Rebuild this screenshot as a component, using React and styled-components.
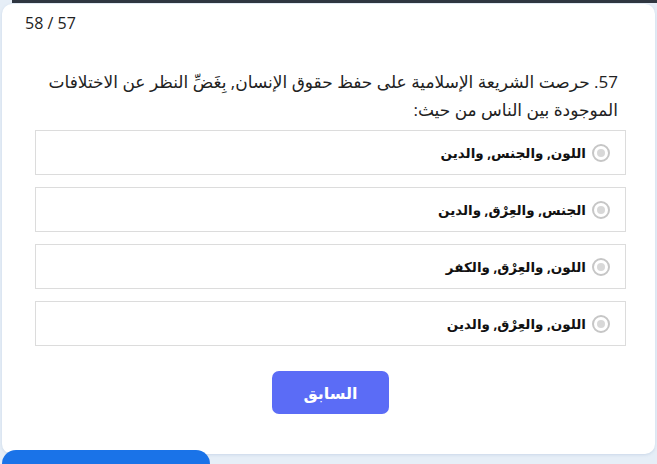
import React from "react";
import styled, { createGlobalStyle } from "styled-components";

const Global = createGlobalStyle`
  html, body { margin: 0; padding: 0; }
  body {
    background: #e6eef7;
    font-family: "Open Sans", "DejaVu Sans", sans-serif;
    width: 657px;
    height: 464px;
    overflow: hidden;
  }
`;

const Page = styled.div`
  position: relative;
  width: 657px;
  height: 464px;
  padding-left: 2px;
  box-sizing: border-box;
`;

const TopRule = styled.div`
  margin-left: 10px;
  height: 3px;
  background: #2f3640;
`;

const Card = styled.div`
  margin-top: 1px;
  width: 653px;
  height: 450px;
  background: #fff;
  border-radius: 10px;
  box-shadow: 0 1px 3px rgba(120, 150, 190, 0.25);
  box-sizing: border-box;
  padding: 8px 29px 0 23px;
  display: flex;
  flex-direction: column;
`;

const Counter = styled.div`
  font-size: 16px;
  color: #222;
  line-height: 22px;
`;

const Question = styled.div`
  direction: rtl;
  margin-top: 34px;
  padding-right: 8px;
  padding-left: 20px;
  font-size: 17px;
  line-height: 28px;
  color: #222;
`;

const Options = styled.div`
  margin-top: 6px;
  margin-left: 10px;
  display: flex;
  flex-direction: column;
  gap: 12px;
`;

const Option = styled.label`
  direction: rtl;
  height: 45px;
  border: 1px solid #dcdcdc;
  box-sizing: border-box;
  display: flex;
  align-items: center;
  gap: 6px;
  padding-right: 15px;
  font-size: 13.5px;
  font-weight: bold;
  color: #111;
  cursor: pointer;
`;

const Radio = styled.span`
  width: 14px;
  height: 14px;
  border-radius: 50%;
  border: 2px solid #c6c6c6;
  background: #fff;
  display: flex;
  align-items: center;
  justify-content: center;
  &::after {
    content: "";
    width: 8px;
    height: 8px;
    border-radius: 50%;
    background: #d8d8d8;
  }
`;

const Footer = styled.div`
  display: flex;
  justify-content: center;
  margin-top: 25px;
  padding-left: 10px;
`;

const PrevButton = styled.button`
  width: 117px;
  height: 43px;
  border: none;
  border-radius: 7px;
  background: #5b6cf6;
  color: #fff;
  font-family: "Open Sans", "DejaVu Sans", sans-serif;
  font-size: 16px;
  font-weight: bold;
`;

const BottomTab = styled.div`
  position: absolute;
  left: 2px;
  top: 450px;
  width: 208px;
  height: 30px;
  background: #1a73e8;
  border-radius: 14px 14px 0 0;
`;

const options = [
  "اللون, والجنس, والدين",
  "الجنس, والعِرْق, والدين",
  "اللون, والعِرْق, والكفر",
  "اللون, والعِرْق, والدين",
];

export default function App() {
  return (
    <>
      <Global />
      <Page>
        <TopRule />
        <Card>
          <Counter>58 / 57</Counter>
          <Question>
            57. حرصت الشريعة الإسلامية على حفظ حقوق الإنسان, بِغَضِّ النظر عن الاختلافات الموجودة بين الناس من حيث:
          </Question>
          <Options>
            {options.map((o) => (
              <Option key={o}>
                <Radio />
                <span>{o}</span>
              </Option>
            ))}
          </Options>
          <Footer>
            <PrevButton>السابق</PrevButton>
          </Footer>
        </Card>
        <BottomTab />
      </Page>
    </>
  );
}
